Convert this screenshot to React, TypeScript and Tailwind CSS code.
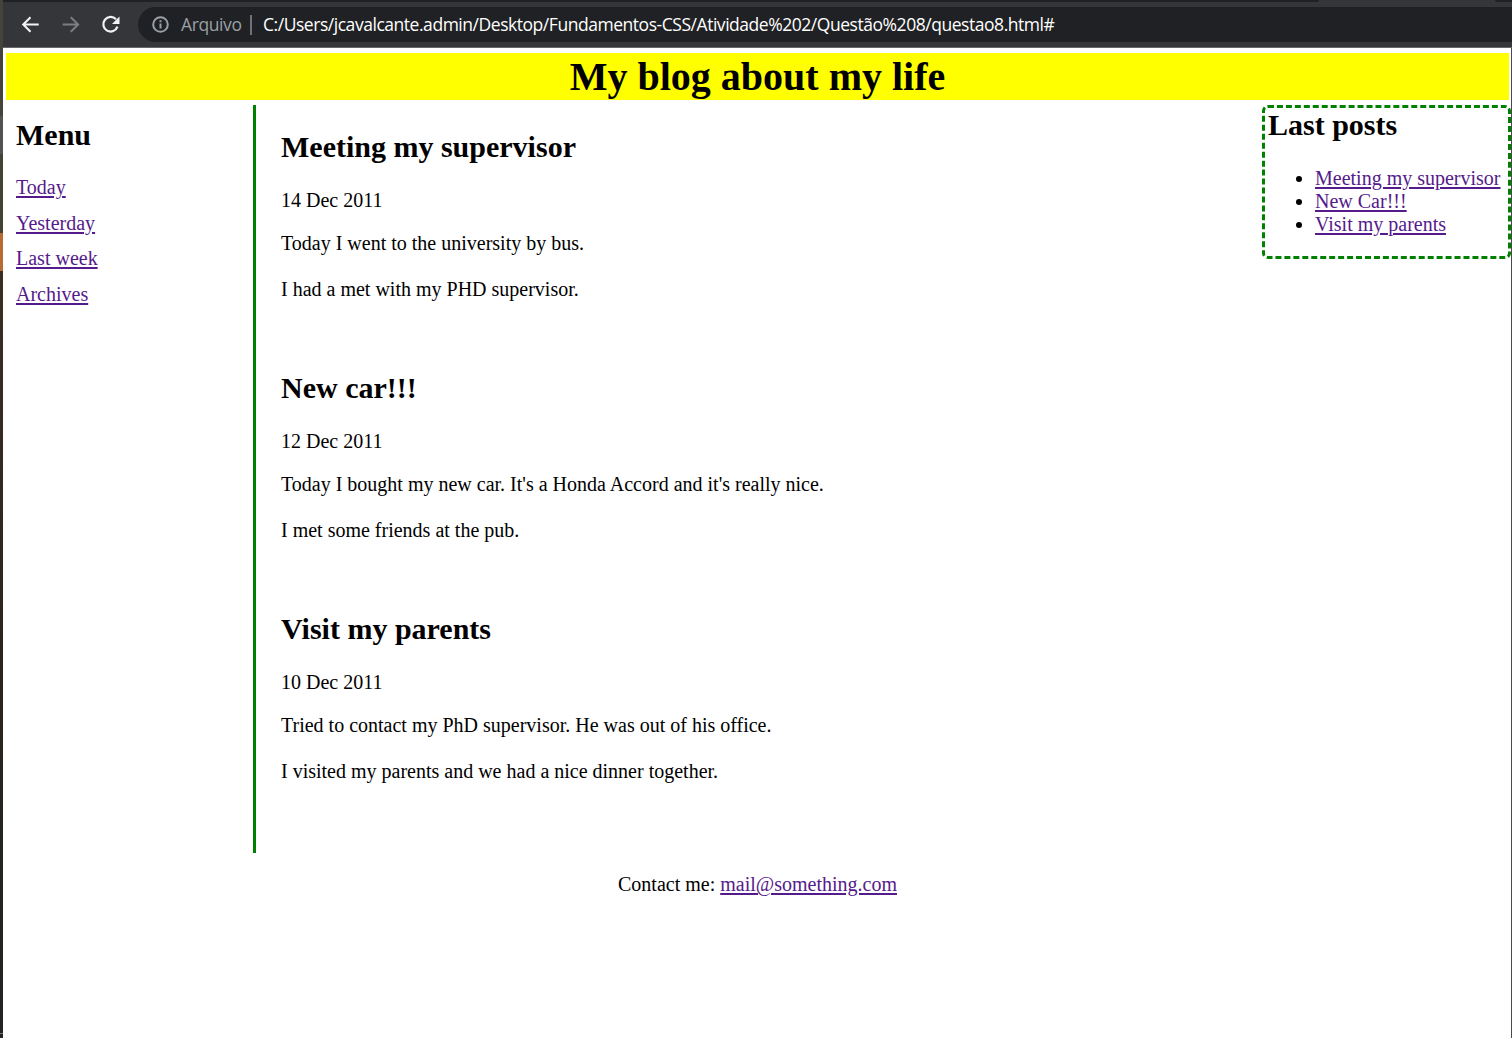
const posts = [
  {
    title: "Meeting my supervisor",
    date: "14 Dec 2011",
    body: ["Today I went to the university by bus.", "I had a met with my PHD supervisor."],
  },
  {
    title: "New car!!!",
    date: "12 Dec 2011",
    body: ["Today I bought my new car. It's a Honda Accord and it's really nice.", "I met some friends at the pub."],
  },
  {
    title: "Visit my parents",
    date: "10 Dec 2011",
    body: ["Tried to contact my PhD supervisor. He was out of his office.", "I visited my parents and we had a nice dinner together."],
  },
];

const link = "text-[#551a8b] underline decoration-[1.5px] underline-offset-2";

function Toolbar() {
  return (
    <div className="flex h-12 flex-col bg-[#35363a]">
      <div className="flex h-[2px] justify-between">
        <div className="h-[2px] w-[1316px] rounded-br-[3px] bg-[#202124]" />
        <div className="h-[2px] w-[17px] rounded-bl-[3px] bg-[#202124]" />
      </div>
      <div className="flex h-[45px] items-center overflow-hidden">
        <svg className="ml-[15px] h-6 w-6 shrink-0" viewBox="0 0 24 24" fill="none" stroke="#f1f3f4" strokeWidth="2">
          <path d="M20.700 11.500H5.500M12.500 4.200 5.200 11.500l7.300 7.300" />
        </svg>
        <svg className="ml-4 h-6 w-6 shrink-0" viewBox="0 0 24 24" fill="none" stroke="#7c7e81" strokeWidth="2">
          <path d="M4.700 11.500H19.800M12.800 4.200 20.100 11.500l-7.300 7.300" />
        </svg>
        <svg className="ml-4 h-6 w-6 shrink-0" viewBox="0 0 24 24" fill="none" stroke="#f1f3f4" strokeWidth="2.200">
          <path d="M18 6.300A7.300 7.300 0 1 0 19.500 13.700" />
          <path d="M21.500 3.500v7.500h-7.500z" fill="#f1f3f4" stroke="none" />
        </svg>
        <div className="ml-4 flex h-[35px] flex-1 items-center rounded-l-full bg-[#202124] font-['Open_Sans',sans-serif] text-[17.5px] whitespace-nowrap">
          <svg className="ml-3.5 h-[17px] w-[17px] shrink-0" viewBox="0 0 17 17" fill="none" stroke="#9aa0a6" strokeWidth="2">
            <circle cx="8.500" cy="8.500" r="7.300" />
            <path d="M8.500 7.500v5M8.500 4.200v2" />
          </svg>
          <span className="ml-3 w-[69px] tracking-[-0.4px] text-[#9aa0a6]">Arquivo</span>
          <span className="h-5 w-[2px] bg-[#6f7276]" />
          <span className="ml-[11px] tracking-[-0.46px] text-white">
            C:/Users/jcavalcante.admin/Desktop/Fundamentos-CSS/Atividade%202/Questão%208/questao8.html#
          </span>
        </div>
      </div>
      <div className="h-px bg-[#68666b]" />
    </div>
  );
}

export default function App() {
  return (
    <div className="flex h-[1038px] w-[1512px] overflow-hidden bg-white font-['Liberation_Serif',serif] text-[20px] leading-[23px] text-black">
      <div className="flex w-[3px] shrink-0 flex-col">
        <div className="h-[116px] bg-[#44443a]" />
        <div className="h-[38px] bg-[#525252]" />
        <div className="h-[79px] bg-[#444233]" />
        <div className="h-[38px] bg-[#b96a30]" />
        <div className="h-[762px] bg-linear-to-b from-[#3c2d22] via-[#2b241e] to-[#222421]" />
        <div className="h-px bg-[#777777]" />
        <div className="flex-1 bg-[#222421]" />
      </div>
      <div className="min-w-0 flex-1">
        <Toolbar />
        <div className="flex h-[990px]">
          <div className="flex min-w-0 flex-1 flex-col">
            <h1 className="mt-[5px] mr-[2px] ml-[3px] h-[47px] bg-[#ffff00] text-center text-[40px] leading-[47px] font-bold">
              My blog about my life
            </h1>
            <div className="mt-[5px] flex h-[748px]">
              <nav className="w-[253px] shrink-0 border-r-[3px] border-[#008000] pt-[13px] pl-[13px]">
                <h2 className="text-[30px] leading-[34px] font-bold">Menu</h2>
                <ul className="mt-6 flex flex-col gap-[12.600px]">
                  {["Today", "Yesterday", "Last week", "Archives"].map((item) => (
                    <li key={item}>
                      <a href="#" className={link}>{item}</a>
                    </li>
                  ))}
                </ul>
              </nav>
              <main className="flex-1 pt-[25px] pl-[25px]">
                {posts.map((post) => (
                  <article key={post.title} className="h-[241px]">
                    <h2 className="text-[30px] leading-[34px] font-bold">{post.title}</h2>
                    <p className="mt-[25px]">{post.date}</p>
                    <p className="mt-5">{post.body[0]}</p>
                    <p className="mt-[23px]">{post.body[1]}</p>
                  </article>
                ))}
              </main>
              <aside className="h-[154px] w-[249px] shrink-0 rounded-[6px] border-[3px] border-dashed border-[#008000] pl-[3px] whitespace-nowrap">
                <h2 className="text-[30px] leading-[34px] font-bold">Last posts</h2>
                <ul className="mt-[25px] list-disc pl-[47px]">
                  {["Meeting my supervisor", "New Car!!!", "Visit my parents"].map((item) => (
                    <li key={item}>
                      <a href="#" className={link}>{item}</a>
                    </li>
                  ))}
                </ul>
              </aside>
            </div>
            <footer className="mt-5 pl-px text-center">
              Contact me: <a href="#" className={link}>mail@something.com</a>
            </footer>
          </div>
          <div className="w-px shrink-0 bg-[#4a4a4a]" />
        </div>
      </div>
    </div>
  );
}
